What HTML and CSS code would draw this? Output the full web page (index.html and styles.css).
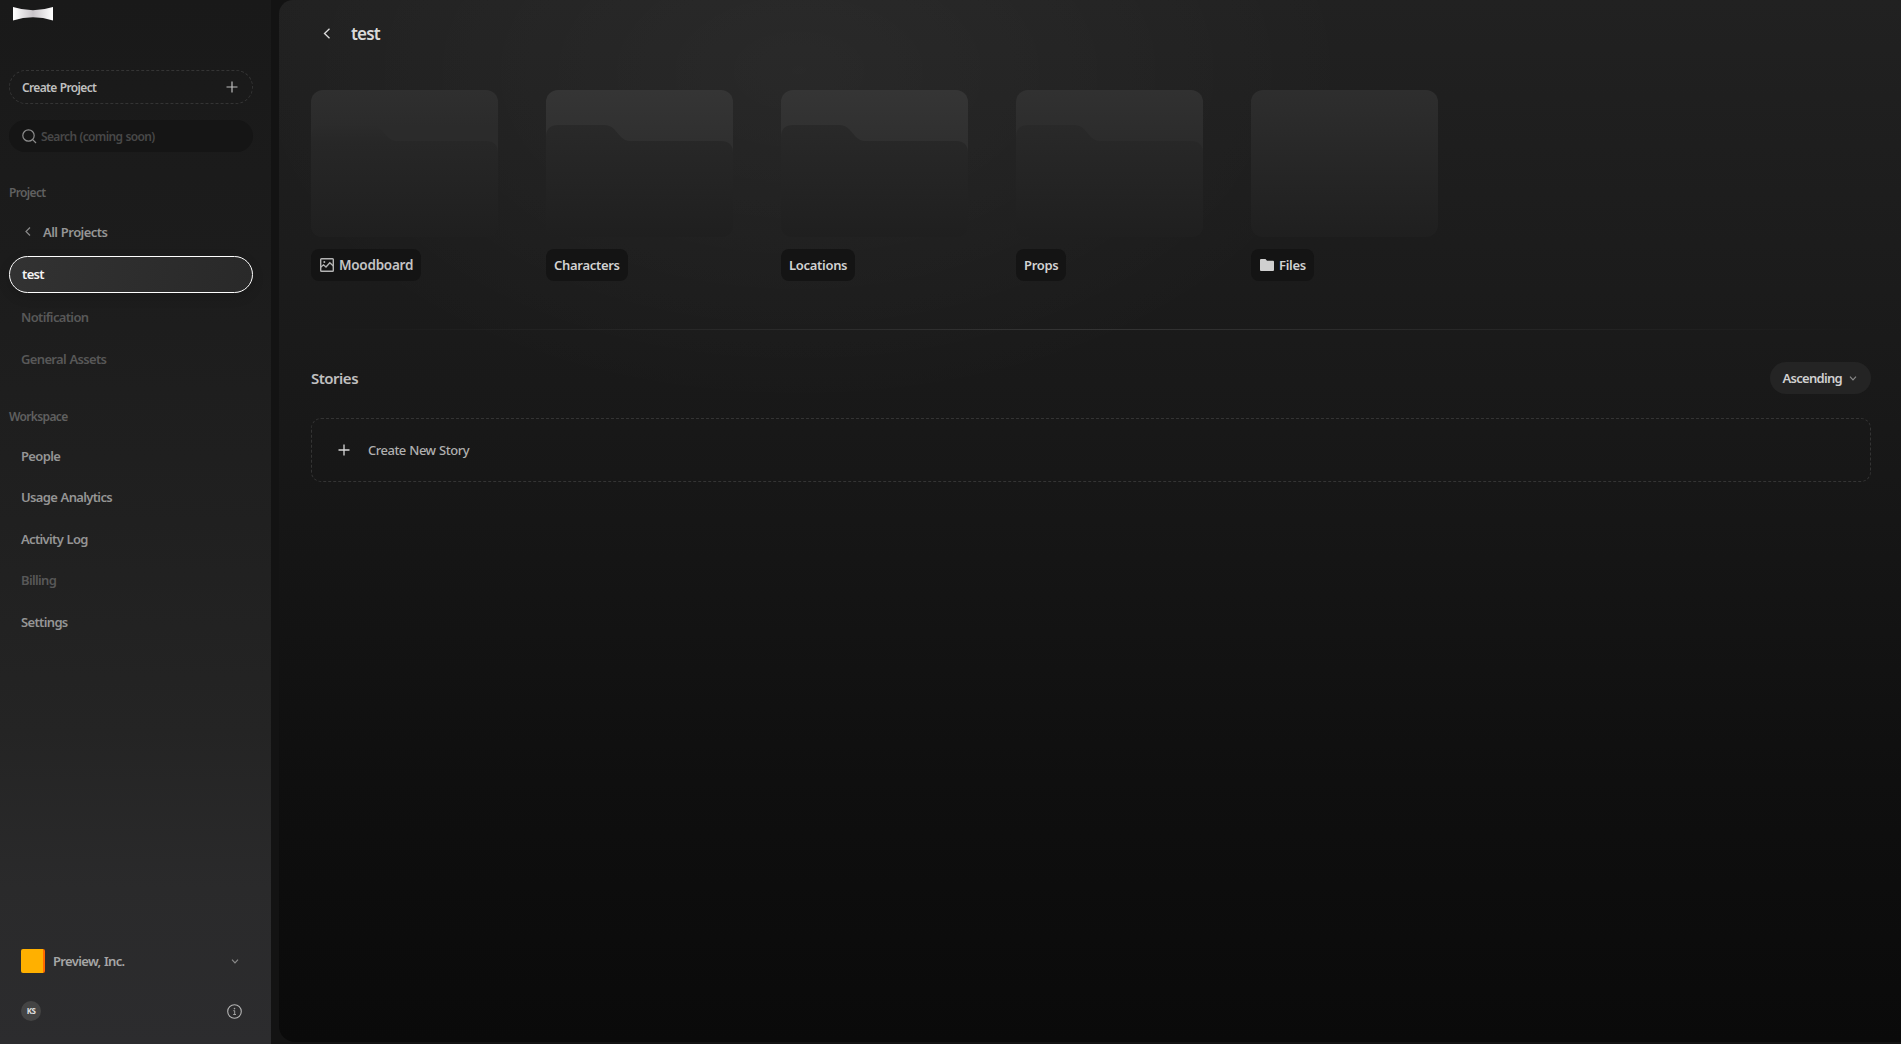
FILE: index.html
```html
<!DOCTYPE html>
<html lang="en">
<head>
    <meta charset="UTF-8">
    <meta name="viewport" content="width=device-width, initial-scale=1.0">
    <title>test</title>
    <link rel="stylesheet" href="styles.css">
</head>
<body>

<div class="app">
    <aside class="sidebar">
        <svg class="logo" width="40" height="14" viewBox="0 0 40 14">
            <defs>
                <linearGradient id="logoFill">
                    <stop offset="0" stop-color="#fff"/>
                    <stop offset="0.5" stop-color="#c9c5c9"/>
                    <stop offset="1" stop-color="#fff"/>
                </linearGradient>
            </defs>
            <path d="M0 0Q20 6.400 40 0V13.500Q20 7.100 0 13.500Z" fill="url(#logoFill)"/>
        </svg>

        <button class="create-project">
            <span>Create Project</span>
            <svg width="12" height="12" viewBox="0 0 12 12"><path d="M6 .5v11M.5 6h11" stroke="#bdbdbd" stroke-width="1.2" fill="none"/></svg>
        </button>

        <div class="search">
            <svg width="15" height="15" viewBox="0 0 15 15"><circle cx="6.500" cy="6.500" r="5.700" stroke="#8c8c8c" stroke-width="1.200" fill="none"/><path d="M10.700 10.700L14 14" stroke="#8c8c8c" stroke-width="1.200" fill="none"/></svg>
            <span>Search (coming soon)</span>
        </div>

        <h2 class="group-title">Project</h2>
        <nav class="menu menu-project">
            <a class="menu-item back"><svg width="6" height="9" viewBox="0 0 6 9"><path d="M5 .5L1 4.500L5 8.500" stroke="#8a8a8a" stroke-width="1.200" fill="none"/></svg><span>All Projects</span></a>
            <a class="menu-item active">test</a>
            <a class="menu-item disabled">Notification</a>
            <a class="menu-item disabled">General Assets</a>
        </nav>

        <h2 class="group-title workspace-title">Workspace</h2>
        <nav class="menu">
            <a class="menu-item">People</a>
            <a class="menu-item">Usage Analytics</a>
            <a class="menu-item">Activity Log</a>
            <a class="menu-item disabled">Billing</a>
            <a class="menu-item">Settings</a>
        </nav>

        <div class="sidebar-footer">
            <div class="company">
                <span class="company-logo"></span>
                <span class="company-name">Preview, Inc.</span>
                <svg width="8" height="5" viewBox="0 0 8 5"><path d="M1 .7L4 3.800L7 .7" stroke="#8a8a8a" stroke-width="1.200" fill="none"/></svg>
            </div>
            <div class="account">
                <span class="avatar">KS</span>
                <svg width="15" height="15" viewBox="0 0 15 15"><circle cx="7.500" cy="7.500" r="6.800" stroke="#b4b4b4" stroke-width="1.100" fill="none"/><path d="M6.300 6.700H7.700V10.500M6.200 10.500H9" stroke="#a0a0a0" fill="none"/><circle cx="7.500" cy="4.600" r=".8" fill="#a0a0a0"/></svg>
            </div>
        </div>
    </aside>

    <main class="content">
        <header class="page-header">
            <svg width="8" height="11" viewBox="0 0 8 11"><path d="M6.500 .7L1.500 5.500L6.500 10.300" stroke="#dcdcdc" stroke-width="1.300" fill="none"/></svg>
            <h1>test</h1>
        </header>

        <section class="folders">
            <div class="folder">
                <div class="folder-cover moodboard-cover">
                    <svg class="folder-front" width="187" height="112" viewBox="0 0 187 112">
                        <defs>
                            <linearGradient id="dimFill" x1="0" y1="0" x2="0" y2="1">
                                <stop offset="0" stop-color="#2b2b2b"/>
                                <stop offset="0.16" stop-color="#272727"/>
                                <stop offset="1" stop-color="#1f1f1f"/>
                            </linearGradient>
                        </defs>
                        <path d="M0 12Q0 0 12 0H60Q66 0 70 4L77 12Q81 16 86 16H175Q187 16 187 28V100Q187 112 175 112H12Q0 112 0 100Z" fill="url(#dimFill)"/>
                    </svg>
                </div>
                <span class="folder-name moodboard">
                    <svg width="14" height="14" viewBox="0 0 14 14"><rect x=".7" y=".7" width="12.600" height="12.600" rx=".8" stroke="#b4b4b4" stroke-width="1.400" fill="none"/><path d="M.6 9.200L3.500 6.800L6 9L9.800 4.800L13.400 8" stroke="#b4b4b4" stroke-width="1.400" fill="none"/><circle cx="4.300" cy="4" r="1" fill="#b4b4b4"/></svg>
                    Moodboard
                </span>
            </div>
            <div class="folder">
                <div class="folder-cover">
                    <svg class="folder-front" width="187" height="112" viewBox="0 0 187 112">
                        <defs>
                            <linearGradient id="frontFill" x1="0" y1="0" x2="0" y2="1">
                                <stop offset="0" stop-color="#292929"/>
                                <stop offset="1" stop-color="#1f1f1f"/>
                            </linearGradient>
                        </defs>
                        <path d="M0 12Q0 0 12 0H58Q64 0 68 4L75 12Q79 16 84 16H175Q187 16 187 28V100Q187 112 175 112H12Q0 112 0 100Z" fill="url(#frontFill)"/>
                    </svg>
                </div>
                <span class="folder-name">Characters</span>
            </div>
            <div class="folder">
                <div class="folder-cover">
                    <svg class="folder-front" width="187" height="112" viewBox="0 0 187 112"><path d="M0 12Q0 0 12 0H58Q64 0 68 4L75 12Q79 16 84 16H175Q187 16 187 28V100Q187 112 175 112H12Q0 112 0 100Z" fill="url(#frontFill)"/></svg>
                </div>
                <span class="folder-name">Locations</span>
            </div>
            <div class="folder">
                <div class="folder-cover props">
                    <svg class="folder-front" width="187" height="112" viewBox="0 0 187 112"><path d="M0 12Q0 0 12 0H58Q64 0 68 4L75 12Q79 16 84 16H175Q187 16 187 28V100Q187 112 175 112H12Q0 112 0 100Z" fill="url(#frontFill)"/></svg>
                </div>
                <span class="folder-name">Props</span>
            </div>
            <div class="folder">
                <div class="folder-cover dim"></div>
                <span class="folder-name files">
                    <svg width="14" height="12" viewBox="0 0 14 12"><path d="M0 1Q0 0 1 0H5.500L7 1.700H13Q14 1.700 14 2.700V11Q14 12 13 12H1Q0 12 0 11Z" fill="#cfcfcf"/></svg>
                    Files
                </span>
            </div>
        </section>

        <hr class="divider">

        <section class="stories">
            <div class="stories-header">
                <h2>Stories</h2>
                <button class="sort">Ascending <svg width="8" height="5" viewBox="0 0 8 5"><path d="M1 .7L4 3.800L7 .7" stroke="#8a8a8a" stroke-width="1.200" fill="none"/></svg></button>
            </div>
            <button class="create-story">
                <svg width="12" height="12" viewBox="0 0 12 12"><path d="M6 .5v11M.5 6h11" stroke="#d8d8d8" stroke-width="1.300" fill="none"/></svg>
                <span>Create New Story</span>
            </button>
        </section>
    </main>
</div>

</body>
</html>
```
FILE: styles.css
```css
* {
    box-sizing: border-box;
}
body {
    margin: 0;
    background-color: #131313;
    font-family: "Noto Sans", "Open Sans", sans-serif;
    font-size: 13px;
    font-weight: 600;
    letter-spacing: -0.65px;
    word-spacing: 0.6px;
    color: #959595;
}
h1, h2 {
    margin: 0;
    font-weight: 600;
}
button {
    font: inherit;
    letter-spacing: inherit;
    word-spacing: inherit;
    background: none;
    border: none;
}
svg {
    display: block;
    flex-shrink: 0;
}
.app {
    display: flex;
    gap: 8px;
    height: 1044px;
    overflow: hidden;
}

/* Sidebar */
.sidebar {
    display: flex;
    flex-direction: column;
    width: 271px;
    padding: 7px 18px 23px 9px;
    background: linear-gradient(180deg, #191919 0%, #1c1c1c 25%, #202020 50%, #242424 70%, #2a2a2b 85%, #2c2c2e 100%);
}
.logo {
    margin-left: 4px;
}
.create-project {
    display: flex;
    align-items: center;
    justify-content: space-between;
    height: 34px;
    margin-top: 49px;
    padding: 0 14px 0 12px;
    border: 1px dashed #343434;
    border-radius: 17px;
    font-size: 12px;
    color: #c0c0c0;
}
.search {
    display: flex;
    align-items: center;
    gap: 4px;
    height: 32px;
    margin-top: 16px;
    padding: 0 13px;
    border-radius: 16px;
    background-color: #151515;
    font-size: 12px;
    color: #484848;
}
.group-title {
    height: 16px;
    margin-top: 33px;
    font-size: 12px;
    line-height: 16px;
    color: #606060;
}
.workspace-title {
    margin-top: 31px;
}
.menu {
    display: flex;
    flex-direction: column;
    gap: 4px;
    margin-top: 12px;
}
.menu-project {
    gap: 5px;
}
.menu-item {
    display: flex;
    align-items: center;
    height: 37.5px;
    padding-left: 12px;
}
.menu-item.back {
    gap: 12px;
    padding-left: 16px;
    letter-spacing: -0.55px;
}
.menu-item.active {
    border: 1px solid #fff;
    border-radius: 19px;
    background: linear-gradient(100deg, #323232, #292929);
    box-shadow: 0 4px 12px rgba(0, 0, 0, 0.15);
    color: #f5f5f5;
}
.menu-item.disabled {
    color: #585858;
}
.sidebar-footer {
    display: flex;
    flex-direction: column;
    gap: 28px;
    margin-top: auto;
    padding: 0 11px 0 12px;
}
.company {
    display: flex;
    align-items: center;
    gap: 8px;
    padding-right: 3px;
    color: #a6a6a6;
}
.company-logo {
    width: 24px;
    height: 24px;
    border-radius: 2px;
    background: linear-gradient(90deg, #ffb000 22px, #ff6a00 22px);
}
.company-name {
    flex: 1;
}
.account {
    display: flex;
    align-items: center;
    justify-content: space-between;
}
.avatar {
    width: 20px;
    height: 20px;
    border-radius: 50%;
    background-color: #444;
    font-size: 8px;
    font-weight: 700;
    line-height: 20px;
    letter-spacing: -0.6px;
    text-align: center;
    color: #e0e0e0;
}

/* Content */
.content {
    flex: 1;
    height: 1042px;
    padding: 0 30px 0 32px;
    border-radius: 14px 0 0 16px;
    background: radial-gradient(ellipse 560px 340px at 520px 70px, rgba(255, 255, 255, 0.045), transparent),
        linear-gradient(180deg, #212121 0%, #1b1b1b 28%, #161616 50%, #0f0f0f 75%, #0a0a0a 100%);
}
.page-header {
    display: flex;
    align-items: center;
    gap: 20px;
    height: 66px;
    padding-left: 12px;
}
.page-header h1 {
    font-size: 17px;
    letter-spacing: -0.8px;
    color: #d9d9d9;
}
.folders {
    display: flex;
    gap: 48px;
    padding-top: 24px;
}
.folder {
    width: 187px;
}
.folder-cover {
    height: 147px;
    padding-top: 35px;
    border-radius: 12px;
    background: linear-gradient(180deg, #353535, #2f2f2f 38%, #212121);
}
.folder-cover.props {
    background: linear-gradient(180deg, #313131, #2b2b2b 38%, #202020);
}
.folder-cover.dim {
    background: linear-gradient(180deg, #2e2e2e, #1f1f1f);
}
.folder-cover.moodboard-cover {
    background: linear-gradient(180deg, #2f2f2f, #2b2b2b 25%, #2b2b2b 40%, #1f1f1f);
}
.folder-name {
    display: inline-flex;
    align-items: center;
    height: 32px;
    margin-top: 12px;
    padding: 0 8px;
    border-radius: 8px;
    background-color: #141414;
    letter-spacing: -0.3px;
    color: #d2d2d2;
}
.folder-name.moodboard {
    padding-left: 9px;
    font-size: 13.5px;
    letter-spacing: -0.25px;
    color: #c4c4c4;
}
.folder-name.files {
    padding-left: 9px;
}
.folder-name svg {
    margin-right: 5px;
}
.divider {
    height: 1px;
    margin: 48px 0 32px;
    border: none;
    background: linear-gradient(90deg, transparent, #343434 50%, transparent);
}
.stories-header {
    display: flex;
    align-items: center;
    justify-content: space-between;
}
.stories-header h2 {
    font-size: 15px;
    letter-spacing: -0.5px;
    color: #c0c0c0;
}
.sort {
    display: flex;
    align-items: center;
    gap: 7px;
    height: 32px;
    padding: 0 14px 0 12px;
    border-radius: 16px;
    background-color: #242424;
    letter-spacing: -0.7px;
    color: #d0d0d0;
}
.create-story {
    display: flex;
    align-items: center;
    gap: 18px;
    width: 100%;
    height: 64px;
    margin-top: 24px;
    padding: 0 26px;
    border: 1px dashed #343434;
    border-radius: 10px;
    font-weight: 500;
    letter-spacing: -0.5px;
    color: #b0b0b0;
}
```
